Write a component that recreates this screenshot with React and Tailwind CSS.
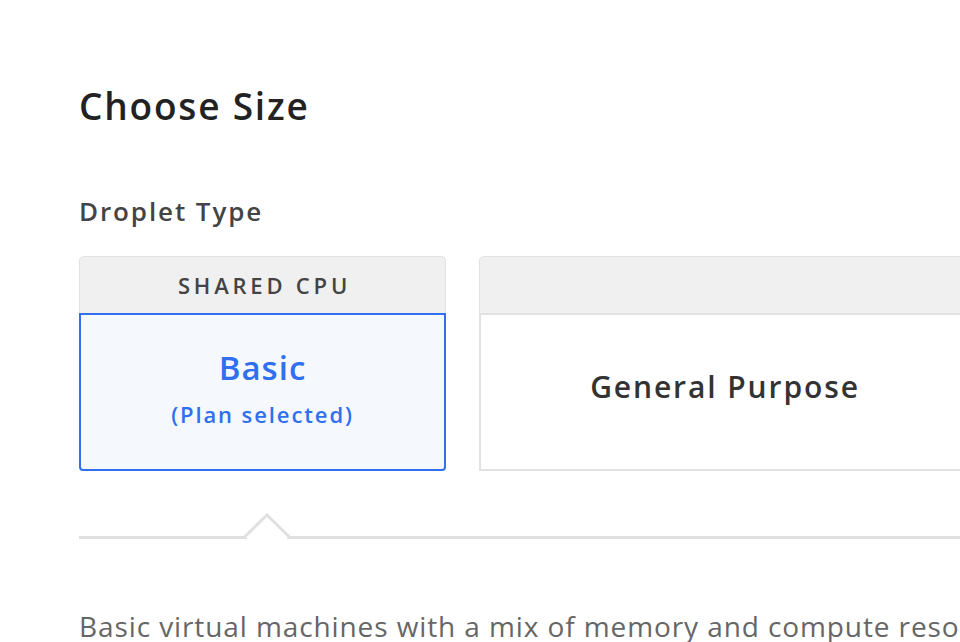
export default function App() {
  return (
    <div className="min-h-screen bg-white overflow-hidden" style={{ fontFamily: '"Open Sans", Lato, sans-serif' }}>
      <main className="pl-[79px] pt-[84px]">
        <h1 className="text-[37px] leading-[44px] font-semibold tracking-[1.8px] text-[#222222]">Choose Size</h1>

        <h2 className="mt-[66px] text-[26px] leading-[34px] font-semibold tracking-[1.9px] text-[#444444]">Droplet Type</h2>

        <div className="mt-[28px] flex gap-[33px]">
          {/* Shared CPU */}
          <div className="w-[367px] shrink-0">
            <div className="h-[57px] flex items-center justify-center bg-[#f0f0f0] border border-b-0 border-[#e2e2e2] rounded-t-[5px] pl-[4px] text-[22px] font-semibold tracking-[3.8px] text-[#444444]">
              SHARED CPU
            </div>
            <div className="h-[158px] pb-[8px] flex flex-col items-center justify-center bg-[#f5f8fd] border-2 border-[#2f6ff0] rounded-b-[4px] text-[#2f6ff0]">
              <div className="text-[33px] leading-[40px] font-semibold tracking-[1px]">Basic</div>
              <div className="mt-[12px] text-[22px] leading-[28px] font-semibold tracking-[1.9px]">(Plan selected)</div>
            </div>
          </div>

          {/* Dedicated CPU */}
          <div className="w-[492px] shrink-0">
            <div className="h-[57px] bg-[#f0f0f0] border border-b-0 border-[#e2e2e2] rounded-t-[5px]" />
            <div className="h-[158px] pb-[12px] flex items-center justify-center bg-white border-2 border-[#e2e2e2] text-[30px] font-semibold tracking-[1.9px] text-[#333333]">
              General Purpose
            </div>
          </div>
        </div>

        {/* Divider with caret */}
        <div className="relative mt-[65px] h-[3px] bg-[#e0e0e0]">
          <svg className="absolute left-[164px] top-[-23px]" width="48" height="26" viewBox="0 0 48 26">
            <polyline points="1,24.5 24,2 47,24.5" fill="white" stroke="#e0e0e0" strokeWidth="3" />
            <rect x="4" y="24" width="40" height="2" fill="white" />
          </svg>
        </div>

        <p className="mt-[69px] whitespace-nowrap text-[28px] leading-[36px] tracking-[0.9px] text-[#666666]">
          Basic virtual machines with a mix of memory and compute resources
        </p>
      </main>
    </div>
  );
}
